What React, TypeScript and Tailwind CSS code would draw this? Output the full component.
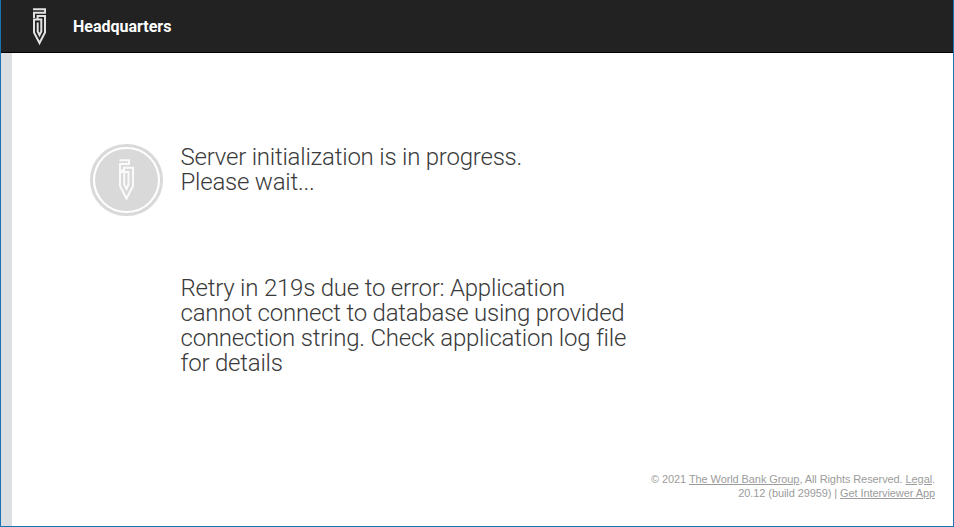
type MarkProps = { className: string };

function HeaderMark({ className }: MarkProps) {
  return (
    <svg viewBox="0 0 13 38" className={className} fill="none" stroke="currentColor" strokeWidth={2} aria-hidden="true">
      <path d="M0 1.3H12.1V4.7H1V10" />
      <path d="M4.6 11V8H12V24.5L6.5 35L1 24.5V11.5H8.3V23.5L6.5 27L4.7 23.5V14.5" />
    </svg>
  );
}

function BadgeMark({ className }: MarkProps) {
  return (
    <svg viewBox="0 0 15 42" className={className} fill="none" stroke="currentColor" strokeWidth={2} aria-hidden="true">
      <path d="M0.5 1.2H10V5H1V11.5H5V8.8H14V27L7.5 39.5L1 27V13H9.5V25.5L7.5 30L5.2 25.5V14" />
    </svg>
  );
}

export default function App() {
  return (
    <div className="flex h-[527px] w-[954px] flex-col overflow-hidden border-x border-b border-[#1a73b5] bg-white font-['Roboto',sans-serif]">
      <header className="flex h-[53px] shrink-0 items-center border-b border-black bg-[#222222] pt-[2px] pl-8 text-white">
        <HeaderMark className="h-[38px] w-[13px] text-[#e2e2e2]" />
        <span className="ml-[27px] text-[16px] leading-5 font-bold">Headquarters</span>
      </header>
      <div className="flex min-h-0 flex-1">
        <aside className="w-[11px] shrink-0 bg-[#dbdfe2]" />
        <div className="flex flex-1 flex-col justify-between pt-[91px] pr-[18px] pb-[26px] pl-[78px]">
          <main className="flex items-start">
            <div className="flex h-[72px] w-[73px] shrink-0 items-center justify-center rounded-full border-[3px] border-[#d9d9d9] p-[2px]">
              <div className="flex h-full w-full items-center justify-center rounded-full bg-[#d9d9d9]">
                <BadgeMark className="h-[42px] w-[15px] text-[#fafafa]" />
              </div>
            </div>
            <div className="ml-[17.5px] w-[460px] pt-px text-[24px] leading-[25px] font-light tracking-[-0.22px] text-[#3a3a3a]">
              <p>
                Server initialization is in progress.
                <br />
                Please wait...
              </p>
              <p className="mt-[81px]">
                Retry in 219s due to error: Application
                <br />
                cannot connect to database using provided
                <br />
                connection string. Check application log file
                <br />
                for details
              </p>
            </div>
          </main>
          <footer className="text-right font-['Liberation_Sans',sans-serif] text-[11px] leading-[14px] tracking-[-0.09px] text-[#9c9c9c]">
            <p>
              © 2021 <a className="underline">The World Bank Group</a>, All Rights Reserved. <a className="underline">Legal</a>.
            </p>
            <p>
              20.12 (build 29959) | <a className="underline">Get Interviewer App</a>
            </p>
          </footer>
        </div>
      </div>
    </div>
  );
}
